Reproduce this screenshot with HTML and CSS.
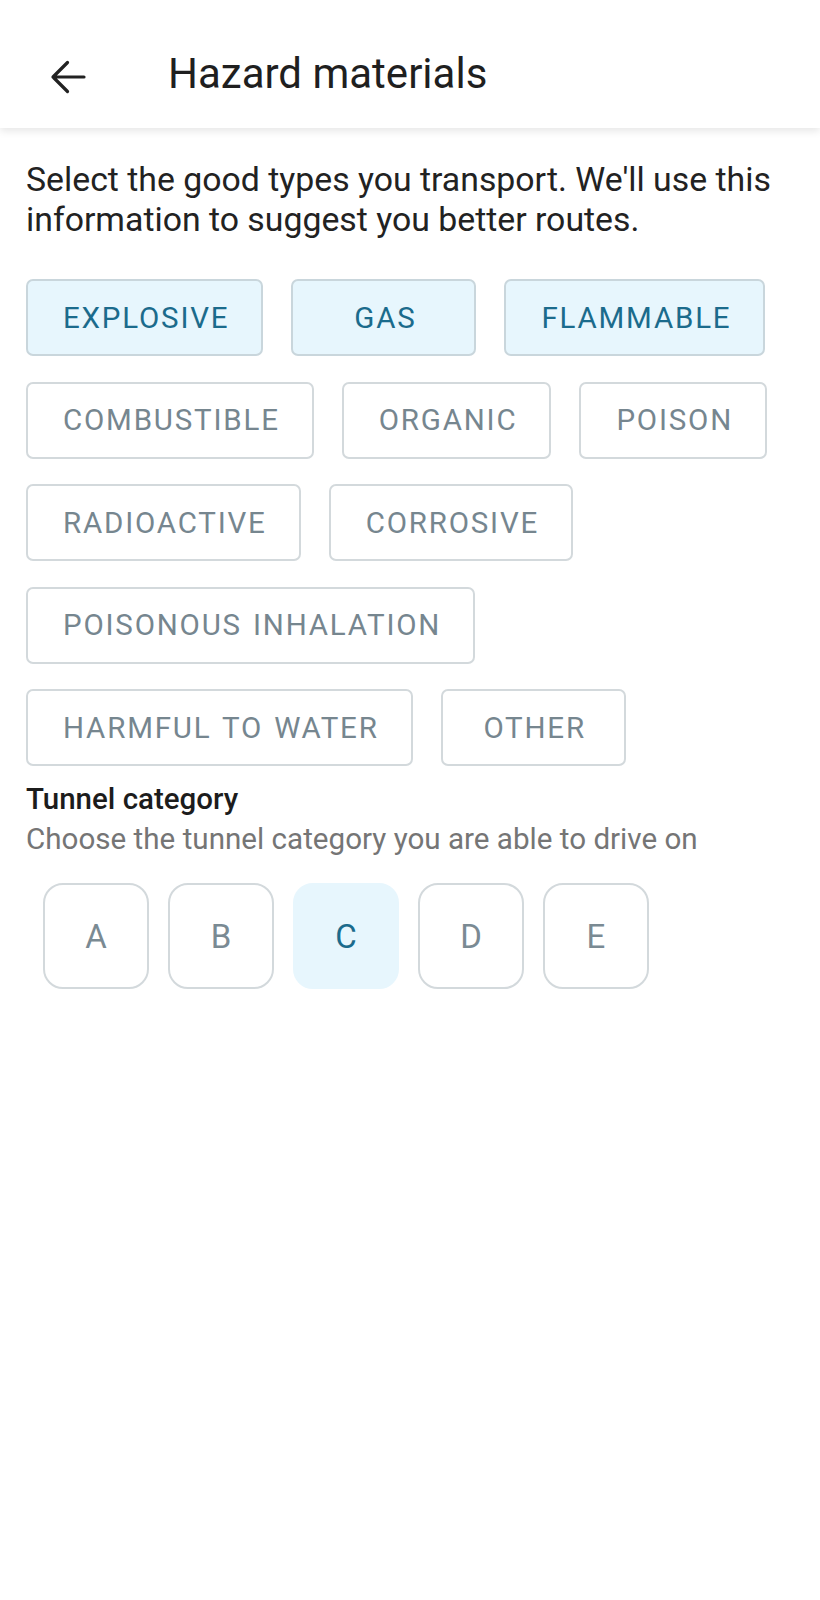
FILE: index.html
```html
<!DOCTYPE html>
<html lang="en">
<head>
<meta charset="utf-8">
<title>Hazard materials</title>
<link rel="stylesheet" href="styles.css">
</head>
<body>
<header class="appbar">
  <button class="back" aria-label="Back">
    <svg width="40" height="40" viewBox="0 0 40 40" aria-hidden="true">
      <path d="M5 20 H36 M5 20 L19.5 5.5 M5 20 L19.5 34.5" fill="none" stroke="#222" stroke-width="3.2" stroke-linecap="round" stroke-linejoin="round"/>
    </svg>
  </button>
  <h1 class="title">Hazard materials</h1>
</header>
<main class="content">
  <p class="intro">Select the good types you transport. We'll use this information to suggest you better routes.</p>
  <div class="chips">
    <button class="chip is-selected">EXPLOSIVE</button>
    <button class="chip is-selected">GAS</button>
    <button class="chip is-selected">FLAMMABLE</button>
    <button class="chip">COMBUSTIBLE</button>
    <button class="chip">ORGANIC</button>
    <button class="chip">POISON</button>
    <button class="chip">RADIOACTIVE</button>
    <button class="chip">CORROSIVE</button>
    <button class="chip">POISONOUS INHALATION</button>
    <button class="chip">HARMFUL TO WATER</button>
    <button class="chip">OTHER</button>
  </div>
  <section class="tunnel">
    <h2 class="tunnel-title">Tunnel category</h2>
    <p class="tunnel-sub">Choose the tunnel category you are able to drive on</p>
    <div class="tunnel-options">
      <button class="cat">A</button>
      <button class="cat">B</button>
      <button class="cat is-selected">C</button>
      <button class="cat">D</button>
      <button class="cat">E</button>
    </div>
  </section>
</main>
</body>
</html>
```

FILE: styles.css
```css
* { box-sizing: border-box; }
html, body { margin: 0; padding: 0; background: #fff; }
body {
  font-family: Roboto, "Noto Sans", Arial, sans-serif;
  color: #1f1f1f;
  width: 820px;
}
.appbar {
  height: 128px;
  padding-top: 26px;
  display: flex;
  align-items: center;
  background: #fff;
  box-shadow: 0 3px 8px rgba(0,0,0,0.1);
  position: relative;
  z-index: 1;
}
.back {
  margin-left: 48px;
  width: 40px;
  height: 40px;
  padding: 0;
  border: 0;
  background: none;
  display: flex;
}
.title {
  margin: 0 0 7px 80px;
  font-size: 42px;
  line-height: 50px;
  font-weight: 400;
  color: #1f1f1f;
}
.content { padding: 32px 26px 0 26px; }
.intro {
  margin: 0;
  font-size: 33.8px;
  line-height: 40px;
  color: #222;
}
.chips {
  margin-top: 39px;
  display: flex;
  flex-wrap: wrap;
  column-gap: 28px;
  row-gap: 25.5px;
  width: 768px;
}
.chip {
  height: 77px;
  min-width: 185px;
  padding: 0 32px 0 35px;
  border: 2px solid #d3d9dc;
  border-radius: 7px;
  background: #fff;
  font-family: inherit;
  font-size: 29.5px;
  letter-spacing: 1.8px;
  word-spacing: 2px;
  color: #76868f;
}
.chip.is-selected {
  background: #e7f6fd;
  border-color: #c9d6dc;
  color: #1b6b8c;
}
.tunnel { margin-top: 13px; }
.tunnel-title {
  margin: 0;
  font-size: 29.5px;
  line-height: 40px;
  font-weight: 500;
  color: #1c1c1c;
}
.tunnel-sub {
  margin: 0;
  font-size: 29.6px;
  line-height: 40px;
  color: #757575;
}
.tunnel-options {
  margin: 24px 0 0 17px;
  display: flex;
  gap: 19px;
}
.cat {
  width: 106px;
  height: 106px;
  border: 2px solid #d3d9dc;
  border-radius: 20px;
  background: #fff;
  font-family: inherit;
  font-size: 33px;
  color: #7a8a93;
  padding: 0;
}
.cat.is-selected {
  background: #e7f6fd;
  border-color: #e7f6fd;
  color: #1b6b8c;
}
```
